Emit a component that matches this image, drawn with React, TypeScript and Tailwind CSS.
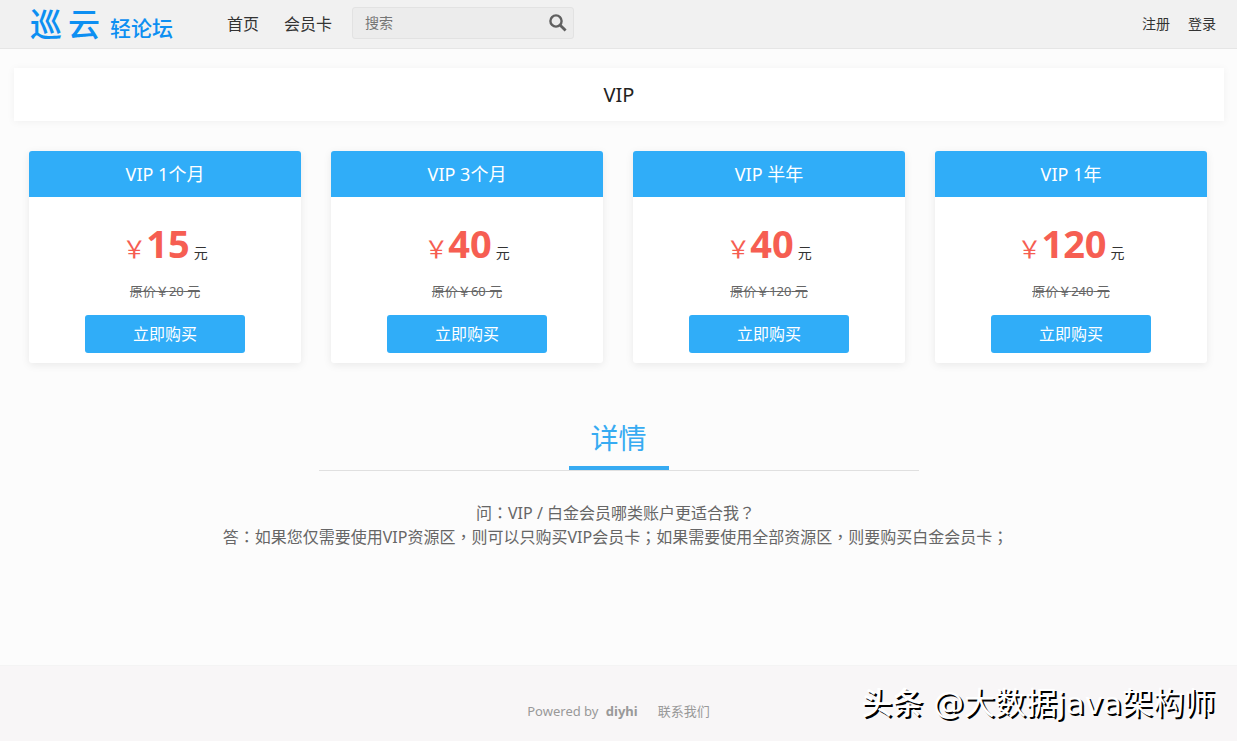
import { Fragment } from 'react'

const PLANS = [
  { name: 'VIP 1个月', price: 15, original: 20 },
  { name: 'VIP 3个月', price: 40, original: 60 },
  { name: 'VIP 半年', price: 40, original: 120 },
  { name: 'VIP 1年', price: 120, original: 240 },
]

const DETAILS = [
  '问：VIP / 白金会员哪类账户更适合我？',
  '答：如果您仅需要使用VIP资源区，则可以只购买VIP会员卡；如果需要使用全部资源区，则要购买白金会员卡；',
]

const SearchIcon = () => (
  <svg viewBox="0 0 18 18" className="h-[18px] w-[18px]" fill="none" stroke="currentColor" aria-hidden="true">
    <circle cx="7" cy="7" r="5.6" strokeWidth="2.4" />
    <path d="M11 11l5.6 5.6" strokeWidth="2.8" />
  </svg>
)

const Header = () => (
  <header className="flex h-[49px] items-center border-b border-[#e6e6e6] bg-[#f1f1f1] pr-[21px] pl-[30px] text-[#333]">
    <a href="#" className="flex items-baseline text-[#0d8ff2]">
      <span className="flex gap-[6px] text-[32px] leading-[48px] font-medium">
        <span>巡</span>
        <span>云</span>
      </span>
      <span className="ml-[10px] text-[21px] leading-8 font-medium">轻论坛</span>
    </a>
    <nav className="ml-[54px] flex gap-[25px] text-base">
      <a href="#">首页</a>
      <a href="#">会员卡</a>
    </nav>
    <form className="mb-[2px] ml-5 flex h-8 w-[222px] items-center rounded-[3px] border border-[#e2e2e2] bg-[#ececec] pr-[6px] pl-3">
      <input
        type="text"
        aria-label="搜索"
        placeholder="搜索"
        className="min-w-0 flex-1 bg-transparent text-sm text-[#555] outline-none placeholder:text-[#757575]"
      />
      <button type="button" aria-label="搜索" className="text-[#606060]">
        <SearchIcon />
      </button>
    </form>
    <div className="ml-auto flex gap-[18px] text-sm">
      <a href="#">注册</a>
      <a href="#">登录</a>
    </div>
  </header>
)

const PlanCard = ({ name, price, original }: (typeof PLANS)[number]) => (
  <section className="overflow-hidden rounded-[3px] bg-white text-center shadow-[0_2px_8px_rgba(0,0,0,0.08)]">
    <h2 className="bg-[#30adf8] text-lg leading-[46px] text-white">{name}</h2>
    <div className="flex flex-col items-center pt-[22px] pb-[10px]">
      <p className="flex items-baseline text-sm leading-[48px] text-[#333]">
        <span className="text-2xl leading-[48px] text-[#f65e52]">￥</span>
        <span className="mr-1 text-[38px] leading-[48px] font-bold text-[#f65e52]">{price}</span>
        元
      </p>
      <del className="mt-1 text-[13px] leading-5 text-[#666]">
        原价￥{original} 元
      </del>
      <button type="button" className="mt-[14px] h-[38px] w-40 rounded-[3px] bg-[#30adf8] text-base text-white">
        立即购买
      </button>
    </div>
  </section>
)

// full-width punctuation sits in the middle of its box
const Line = ({ text }: { text: string }) => (
  <p>
    {text.split(/([：，；？])/).map((part, index) =>
      index % 2 ? (
        <span key={index} lang="zh-Hant" className="font-['Noto_Sans_CJK_TC',sans-serif] leading-none">{part}</span>
      ) : (
        <Fragment key={index}>{part}</Fragment>
      )
    )}
  </p>
)

const App = () => {
  return (
    <div
      lang="zh-Hans"
      className="flex min-h-screen flex-col bg-[#fcfcfc] font-['Noto_Sans','Noto_Sans_CJK_SC',sans-serif]"
    >
      <Header />
      <main className="flex-1">
        <h1 className="mr-[13px] ml-[14px] mt-[19px] bg-white text-center text-xl leading-[53px] text-[#222] shadow-[0_1px_8px_rgba(0,0,0,0.05)]">
          VIP
        </h1>
        <div className="mt-[30px] grid grid-cols-4 gap-[30px] pr-[30px] pl-[29px]">
          {PLANS.map((plan) => (
            <PlanCard key={plan.name} {...plan} />
          ))}
        </div>
        <div className="mx-auto mt-12 flex max-w-[600px] justify-center border-b border-[#e0e0e0]">
          <h2 className="w-[100px] border-b-4 border-[#37abf2] text-center text-[28px] leading-[55px] text-[#37abf2]">
            详情
          </h2>
        </div>
        <div className="mt-[30px] pr-[6px] text-center text-base text-[#666]">
          {DETAILS.map((text) => (
            <Line key={text} text={text} />
          ))}
        </div>
      </main>
      <footer className="relative flex h-[76px] items-center justify-center border-t border-[#f4f4f4] bg-[#f8f6f7] pt-4 text-[13px] text-[#999]">
        <span>
          Powered by{' '}
          <a href="#" className="ml-1 font-bold">diyhi</a>
        </span>
        <a href="#" className="ml-5">联系我们</a>
        <p className="absolute right-[22px] bottom-4 font-['DejaVu_Sans','Noto_Sans_CJK_SC',sans-serif] text-[31px] leading-[44px] text-white [text-shadow:2px_2px_0_#000]">
          <span className="font-medium">头条</span> @大数据java架构师
        </p>
      </footer>
    </div>
  )
}

export default App
